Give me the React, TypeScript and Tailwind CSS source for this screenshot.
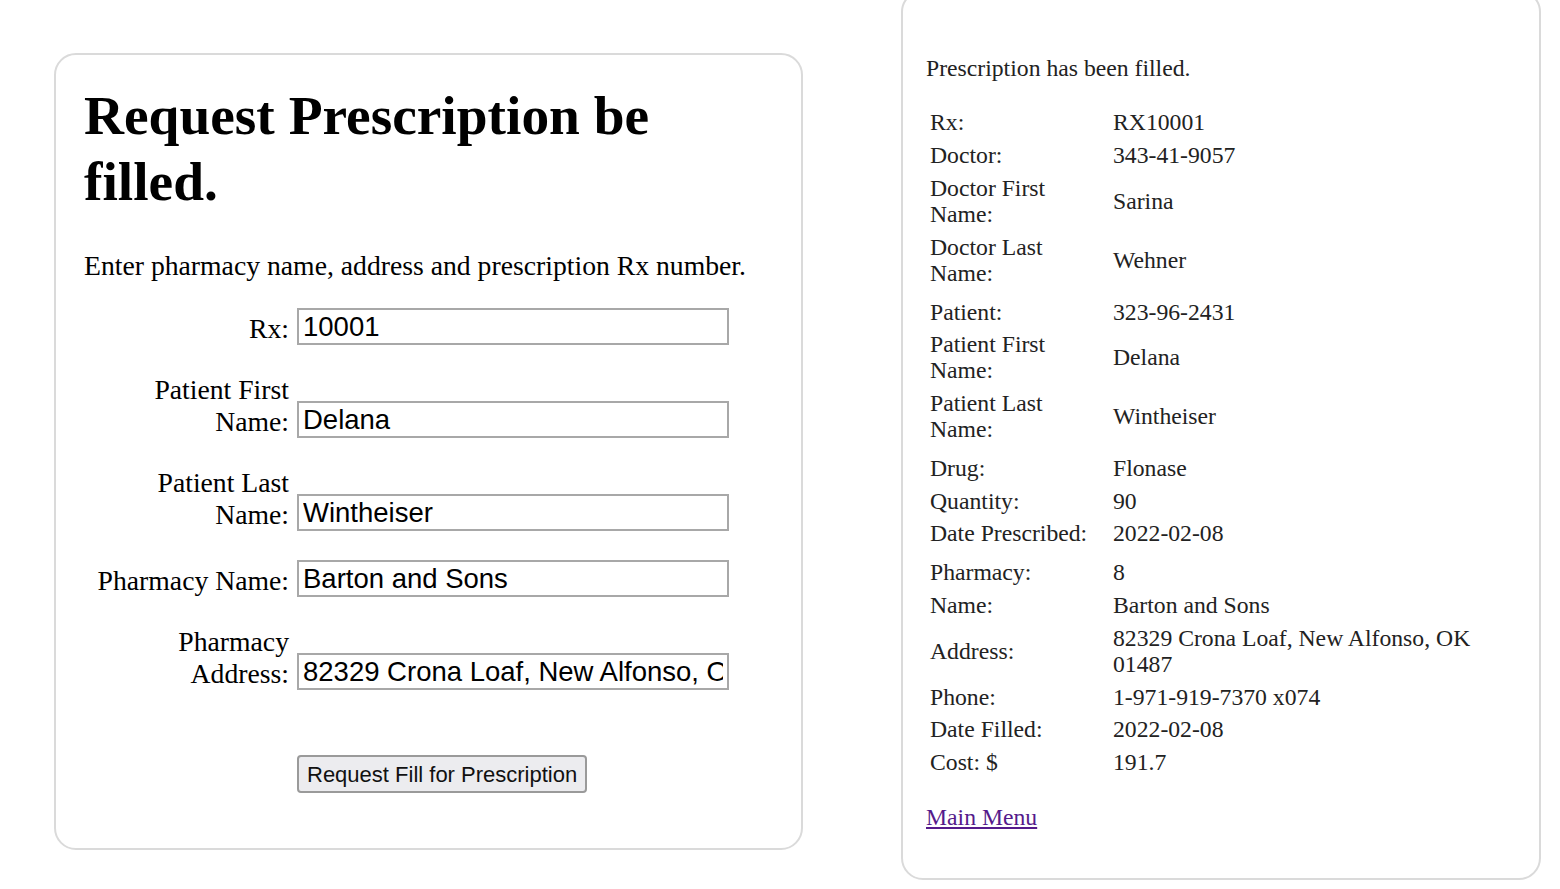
const serif = "font-['Liberation_Serif','Times_New_Roman',serif]";
const sans = "font-['Liberation_Sans',Arial,sans-serif]";

type Field = { label: string; value: string };

const formFields: Field[] = [
  { label: "Rx:", value: "10001" },
  { label: "Patient First Name:", value: "Delana" },
  { label: "Patient Last Name:", value: "Wintheiser" },
  { label: "Pharmacy Name:", value: "Barton and Sons" },
  { label: "Pharmacy Address:", value: "82329 Crona Loaf, New Alfonso, OK 01487" },
];

const groups: Field[][] = [
  [
    { label: "Rx:", value: "RX10001" },
    { label: "Doctor:", value: "343-41-9057" },
    { label: "Doctor First Name:", value: "Sarina" },
    { label: "Doctor Last Name:", value: "Wehner" },
  ],
  [
    { label: "Patient:", value: "323-96-2431" },
    { label: "Patient First Name:", value: "Delana" },
    { label: "Patient Last Name:", value: "Wintheiser" },
  ],
  [
    { label: "Drug:", value: "Flonase" },
    { label: "Quantity:", value: "90" },
    { label: "Date Prescribed:", value: "2022-02-08" },
  ],
  [
    { label: "Pharmacy:", value: "8" },
    { label: "Name:", value: "Barton and Sons" },
    { label: "Address:", value: "82329 Crona Loaf, New Alfonso, OK 01487" },
    { label: "Phone:", value: "1-971-919-7370 x074" },
    { label: "Date Filled:", value: "2022-02-08" },
    { label: "Cost: $", value: "191.7" },
  ],
];

function RequestForm() {
  return (
    <div className="w-[749px] shrink-0 rounded-[22px] border-2 border-[#dadada] bg-white pt-[28px] pb-[55px] pl-[28px] pr-[20px] text-black">
      <h1 className={`${serif} w-[640px] text-[55.4px] font-bold leading-[66px]`}>
        Request Prescription be filled.
      </h1>
      <p className={`${serif} mt-[37px] text-[27.7px] leading-[28px]`}>
        Enter pharmacy name, address and prescription Rx number.
      </p>
      <form className="mt-[28px] flex flex-col gap-[29px]">
        {formFields.map((f) => (
          <div key={f.label} className="flex items-end gap-[8px]">
            <label className={`${serif} ml-[5px] w-[200px] text-right text-[27.7px] leading-[32px]`}>
              {f.label}
            </label>
            <input
              readOnly
              value={f.value}
              className={`${sans} h-[37px] w-[432px] border-2 border-[#a8a8a8] bg-white px-[4px] text-[27.5px] text-black outline-none`}
            />
          </div>
        ))}
        <div className="mt-[36px] pl-[213px]">
          <button
            type="button"
            className={`${sans} h-[38px] rounded-[4px] border-2 border-[#9a9a9a] bg-[#ececef] px-[8px] text-[22px] text-[#111]`}
          >
            Request Fill for Prescription
          </button>
        </div>
      </form>
    </div>
  );
}

function FilledDetails() {
  return (
    <div className={`${serif} mt-[-10px] w-[640px] shrink-0 rounded-[22px] border-2 border-[#dadada] bg-white pt-[63px] pb-[48px] pl-[23px] pr-[23px] text-[23.7px] leading-[26px] text-[#222]`}>
      <p>Prescription has been filled.</p>
      <div className="mt-[25px] flex flex-col gap-[6px] pl-[4px]">
        {groups.map((g, i) => (
          <div key={i} className="flex flex-col">
            {g.map((row) => (
              <div key={row.label} className="flex items-center py-[3.4px]">
                <div className="w-[170px] shrink-0">{row.label}</div>
                <div className="ml-[13px]">{row.value}</div>
              </div>
            ))}
          </div>
        ))}
      </div>
      <a href="#" className="mt-[25px] inline-block text-[#551a8b] underline">
        Main Menu
      </a>
    </div>
  );
}

export default function App() {
  return (
    <div className="flex min-h-[889px] items-start gap-[98px] bg-white pt-[53px] pl-[54px]">
      <RequestForm />
      <div className="-mt-[53px]">
        <FilledDetails />
      </div>
    </div>
  );
}
